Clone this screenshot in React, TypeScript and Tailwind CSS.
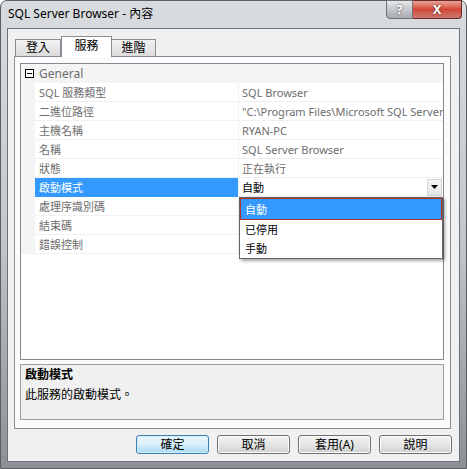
import React from "react";

const FONT = { fontFamily: '"Noto Sans", "Noto Sans CJK TC", sans-serif' };

const rows: { name: string; value: string }[] = [
  { name: "SQL 服務類型", value: "SQL Browser" },
  { name: "二進位路徑", value: '"C:\\Program Files\\Microsoft SQL Server\\90\\Shared\\sqlbrowser.exe"' },
  { name: "主機名稱", value: "RYAN-PC" },
  { name: "名稱", value: "SQL Server Browser" },
  { name: "狀態", value: "正在執行" },
  { name: "啟動模式", value: "自動" },
  { name: "處理序識別碼", value: "" },
  { name: "結束碼", value: "" },
  { name: "錯誤控制", value: "" },
];

function Btn({ label, def }: { label: string; def?: boolean }) {
  return (
    <div
      className={
        "w-[73px] h-[19px] rounded-[3px] border flex items-center justify-center text-[12px] text-black leading-none " +
        (def
          ? "border-[#3c7fb1] bg-gradient-to-b from-[#eaf6fd] via-[#d9f0fc] to-[#a7d9f5] shadow-[inset_0_0_0_1px_#d8eefb]"
          : "border-[#707070] bg-gradient-to-b from-[#f2f2f2] via-[#e6e6e6] to-[#d0d0d0] shadow-[inset_0_0_0_1px_#fcfcfc]")
      }
    >
      {label}
    </div>
  );
}

export default function App() {
  return (
    <div style={FONT} className="w-[467px] h-[469px] overflow-hidden bg-white">
      <div className="w-[467px] h-[469px] rounded-t-[7px] border border-[#5a5d62] bg-gradient-to-b from-[#d9dcdf] via-[#c4c8cc] to-[#8d9196] flex flex-col px-[6px] pb-[6px]">
        {/* title bar */}
        <div className="h-[27px] flex items-start justify-between">
          <div className="pt-[7px] pl-[1px] text-[12px] text-black leading-none">SQL Server Browser - 內容</div>
          <div className="flex -mt-[1px] mr-[-2px]">
            <div className="w-[27px] h-[19px] rounded-bl-[4px] border border-[#6e7277] bg-gradient-to-b from-[#e8eaec] via-[#c4c7cb] to-[#a8acb1] flex items-center justify-center text-white text-[13px] font-bold leading-none [text-shadow:0_0_2px_#333]">
              ?
            </div>
            <div className="w-[49px] h-[19px] rounded-br-[4px] border border-l-0 border-[#6a2a24] bg-gradient-to-b from-[#eba39a] via-[#d2463a] to-[#c9786d] flex items-center justify-center text-white text-[13px] font-bold leading-none [text-shadow:0_0_2px_#411]">
              X
            </div>
          </div>
        </div>
        {/* client */}
        <div className="flex-1 border border-[#6f7379] bg-[#f0f0f0] flex flex-col">
          {/* tabs */}
          <div className="h-[27px] flex items-end pl-[7px]">
            <div className="w-[46px] h-[17px] border border-b-0 border-[#898c95] bg-gradient-to-b from-[#f2f2f2] to-[#dcdcdc] flex items-center justify-center text-[12px] leading-none text-black">
              登入
            </div>
            <div className="w-[51px] h-[21px] -mb-[1px] border border-b-0 border-[#898c95] bg-white flex items-center justify-center text-[12px] leading-none text-black relative z-10 pb-[2px]">
              服務
            </div>
            <div className="w-[44px] h-[17px] border border-b-0 border-l-0 border-[#898c95] bg-gradient-to-b from-[#f2f2f2] to-[#dcdcdc] flex items-center justify-center text-[12px] leading-none text-black">
              進階
            </div>
          </div>
          {/* tab panel */}
          <div className="ml-[6px] mr-[8px] h-[373px] border border-[#898c95] bg-[#fbfbfb] flex flex-col pl-[5px] pr-[6px] pt-[6px]">
            {/* property grid */}
            <div className="relative h-[297px] border border-[#828790] bg-white flex flex-col text-[11px] leading-none">
              {/* category row */}
              <div className="h-[19px] flex items-center bg-[#f4f4f4]">
                <div className="w-[14px] flex justify-center pl-[2px]">
                  <div className="w-[9px] h-[9px] border border-black bg-white flex items-center justify-center">
                    <div className="w-[5px] h-[1px] bg-black" />
                  </div>
                </div>
                <div className="pl-[4px] text-[#6d6d6d] text-[12px]">General</div>
              </div>
              {rows.map((r, i) => {
                const sel = r.name === "啟動模式";
                return (
                  <div key={i} className="h-[19px] flex">
                    <div className="w-[14px] bg-[#f4f4f4]" />
                    <div
                      className={
                        "w-[203px] flex items-center pl-[4px] border-b " +
                        (sel ? "bg-[#3399ff] text-white border-[#3399ff]" : "text-[#6d6d6d] border-[#f0f0f0]")
                      }
                    >
                      {r.name}
                    </div>
                    <div className="w-[1px] bg-[#f0f0f0]" />
                    <div
                      className={
                        "flex-1 min-w-0 flex items-center pl-[3px] border-b border-[#f0f0f0] overflow-hidden whitespace-nowrap " +
                        (sel ? "text-black" : "text-[#6d6d6d]")
                      }
                    >
                      <span className="flex-1">{r.value}</span>
                      {sel && (
                        <div className="w-[15px] h-[17px] mr-[1px] border border-[#d5d5d5] bg-gradient-to-b from-[#f6f6f6] to-[#e4e4e4] flex items-center justify-center">
                          <svg width="7" height="4" viewBox="0 0 7 4">
                            <path d="M0 0 L7 0 L3.5 4 Z" fill="#000" />
                          </svg>
                        </div>
                      )}
                    </div>
                  </div>
                );
              })}
              {/* dropdown list */}
              <div className="absolute left-[218px] top-[133px] w-[204px] h-[62px] border border-[#646464] bg-white shadow-[2px_2px_3px_rgba(0,0,0,0.35)] flex flex-col text-black">
                <div className="h-[22px] border border-[#b0312a] bg-[#3399ff] text-white flex items-center pl-[4px]">
                  自動
                </div>
                <div className="h-[19px] flex items-center pl-[5px]">已停用</div>
                <div className="h-[19px] flex items-center pl-[5px]">手動</div>
              </div>
            </div>
            {/* description */}
            <div className="mt-[4px] h-[56px] border border-[#a0a0a0] bg-[#f0f0f0] flex flex-col pl-[4px] pt-[3px] text-[12px] leading-none text-black">
              <div className="h-[14px] flex items-center font-bold">啟動模式</div>
              <div className="mt-[6px] h-[14px] flex items-center">此服務的啟動模式。</div>
            </div>
          </div>
          {/* buttons */}
          <div className="mt-[6px] flex justify-end gap-[8px] pr-[7px]">
            <Btn label="確定" def />
            <Btn label="取消" />
            <Btn label="套用(A)" />
            <Btn label="說明" />
          </div>
        </div>
      </div>
    </div>
  );
}
